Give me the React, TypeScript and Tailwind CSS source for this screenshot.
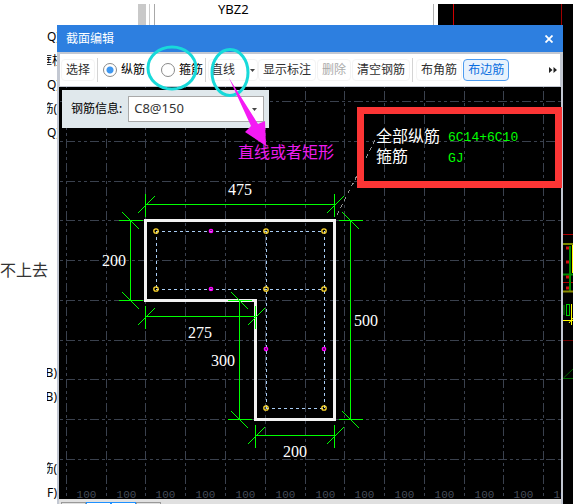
import { useState } from "react";

const rowLabels = [
  { text: "Q)", align: "justify-start" },
  { text: "框柱", align: "justify-center" },
  { text: "Q)", align: "justify-start" },
  { text: "筋(", align: "justify-end" },
  { text: "Q)", align: "justify-start" },
  ...Array.from({ length: 9 }, () => ({ text: "", align: "justify-start" })),
  { text: "B)", align: "justify-end" },
  { text: "B)", align: "justify-end" },
  { text: "", align: "justify-start" },
  { text: "", align: "justify-start" },
  { text: "筋(", align: "justify-end" },
  { text: "F)", align: "justify-end" },
];

const gridX = [66.5, 106.5, 145.5, 185.5, 225.5, 265.5, 305.5, 344.5, 384.5, 424.5, 464.5, 503.5, 543.5];
const gridY = [101.5, 141.5, 181.5, 220.5, 260.5, 300.5, 340.5, 379.5, 419.5, 459.5];

const cornerBars = [
  [156, 231], [266, 231], [324, 231],
  [156, 289], [266, 289], [324, 289],
  [266, 408], [324, 408],
];
const sideBars = [[211, 231], [211, 289], [266, 349], [324, 349]];

const horizontalDims = [
  { y: 204.5, x1: 145.5, x2: 334.5, label: "475", lx: 228, ly: 195 },
  { y: 316.5, x1: 145.5, x2: 255.5, label: "275", lx: 188, ly: 338 },
  { y: 435.5, x1: 255.5, x2: 334.5, label: "200", lx: 283, ly: 457 },
];
const verticalDims = [
  { x: 130.5, y1: 220.5, y2: 300.5, label: "200", lx: 102, ly: 266 },
  { x: 239.5, y1: 300.5, y2: 419.5, label: "300", lx: 211, ly: 366 },
  { x: 350.5, y1: 220.5, y2: 419.5, label: "500", lx: 354, ly: 326 },
];

function SectionDrawing() {
  return (
    <svg className="absolute inset-0 h-full w-full" viewBox="59 87 502 412" preserveAspectRatio="xMinYMin slice" shapeRendering="crispEdges">
      <g stroke="#3a414e" strokeDasharray="9 3 3 3 3 3">
        {gridX.map((x) => <path key={x} d={`M${x} 67V499`} />)}
        {gridY.map((y) => <path key={y} d={`M42 ${y}H561`} />)}
      </g>
      <g fill="#454c59" fontSize="11" fontFamily="'Liberation Mono', monospace" textAnchor="middle">
        {gridX.map((x) => <text key={x} x={x + 20} y="498">100</text>)}
      </g>

      <path d="M145.5 220.5H334.5V419.5H255.5V300.5H145.5Z" fill="none" stroke="#f2f2f2" strokeWidth="3" />
      <path
        d="M156 231.5H324M156 289.5H324M266 408.5H324M156.5 231V289M266.5 231V408M324.5 231V408"
        stroke="#a9cdf5"
        strokeDasharray="3 3"
      />
      <path d="M337 215L376 138" stroke="#8f8f8f" strokeDasharray="4 4" />

      <g fill="none" stroke="#00ff00">
        {horizontalDims.map((d) => (
          <path
            key={d.label}
            d={`M${d.x1} ${d.y}H${d.x2}M${d.x1} ${d.y - 11}v23M${d.x2} ${d.y - 11}v23M${d.x1 - 8} ${d.y + 9}l17 -17M${d.x2 - 8} ${d.y + 9}l17 -17`}
          />
        ))}
        {verticalDims.map((d) => (
          <path
            key={d.label}
            d={`M${d.x} ${d.y1}V${d.y2}M${d.x - 12} ${d.y1}h24M${d.x - 12} ${d.y2}h24M${d.x - 8} ${d.y1 - 8}l17 17M${d.x - 8} ${d.y2 - 8}l17 17`}
          />
        ))}
      </g>
      <g fill="#ffffff" fontSize="16" fontFamily="'Liberation Serif', serif">
        {[...horizontalDims, ...verticalDims].map((d) => (
          <text key={`${d.lx}-${d.ly}`} x={d.lx} y={d.ly}>{d.label}</text>
        ))}
      </g>

      <g fill="none" stroke="#ffd92e" strokeWidth="1.3" shapeRendering="auto">
        {cornerBars.map(([x, y]) => <circle key={`${x}-${y}`} cx={x} cy={y} r="2.2" />)}
      </g>
      <g fill="none" stroke="#ff00ff" strokeWidth="1.5" shapeRendering="auto">
        {sideBars.map(([x, y]) => <circle key={`${x}-${y}`} cx={x} cy={y} r="1.6" />)}
      </g>

      <g fontSize="16" fill="#ffffff" fontFamily="'Noto Sans CJK SC', sans-serif">
        <text x="376" y="142">全部纵筋</text>
        <text x="376" y="162">箍筋</text>
      </g>
      <g fontSize="13" fill="#00ff00" fontFamily="'Liberation Mono', monospace">
        <text x="448" y="141">6C14+6C10</text>
        <text x="448" y="162">GJ</text>
      </g>
    </svg>
  );
}

function PlanStrip() {
  return (
    <svg className="h-full w-[10px] shrink-0 bg-black" viewBox="563 25 10 479" preserveAspectRatio="xMinYMin slice">
      <path d="M563 234.5h10M563 282.5h10" stroke="#b00000" />
      <path d="M563 340.5h10" stroke="#6a0000" />
      <path d="M563 244h10" stroke="#7d8a00" strokeWidth="2" />
      <path d="M570 246V291M563 274.5h10" stroke="#008c00" strokeWidth="2" />
      <path d="M572.5 245V273" stroke="#ffff00" />
      <path d="M563 291.5h10" stroke="#8a8a00" strokeWidth="2" />
      <path d="M566 248h3M566 262h3M566 277h3M566 288h3" stroke="#d01010" strokeWidth="3" />
      <path d="M563 305v10" stroke="#004800" strokeWidth="4" />
      <rect x="566.5" y="304.5" width="3" height="11" fill="none" stroke="#00d000" />
      <path d="M563 320.5h10M571.5 304v21M569 323l4 -5" stroke="#ffff00" />
      <path d="M563 378.5h10M563.5 378l9.5 -9" stroke="#006a00" />
    </svg>
  );
}

// Hand-drawn marks that point out the controls
function Markup() {
  return (
    <svg className="pointer-events-none absolute inset-0 h-full w-full" viewBox="0 0 573 504" preserveAspectRatio="xMinYMin slice">
      <ellipse cx="172" cy="68" rx="24" ry="21" fill="none" stroke="#18dada" strokeWidth="3" />
      <ellipse cx="230" cy="72.5" rx="18" ry="23" fill="none" stroke="#18dada" strokeWidth="3" />
      <path d="M229 78L251 126L245 132L266 146L265 121L258 124Z" fill="#f41af4" />
      <text x="238" y="158" fontSize="16" fill="#ee1cee" fontFamily="'Noto Sans CJK SC', sans-serif">直线或者矩形</text>
      <rect x="360.5" y="110.5" width="198" height="74" fill="none" stroke="#fc3535" strokeWidth="7" />
    </svg>
  );
}

function Divider() {
  return <span className="mx-[2px] h-6 w-px shrink-0 bg-[#d4d4d4]" />;
}

function ToolButton({ children, disabled }: { children: string; disabled?: boolean }) {
  return (
    <button
      disabled={disabled}
      className="h-[22px] shrink-0 rounded border border-[#f4f4f4] px-1 text-[#303030] disabled:text-[#aaaaaa]"
    >
      {children}
    </button>
  );
}

export default function App() {
  const [barType, setBarType] = useState("纵筋");

  return (
    <main className="relative flex h-screen overflow-hidden bg-white font-['Noto_Sans','Noto_Sans_CJK_SC',sans-serif] text-xs text-black">
      <p className="w-[47px] shrink-0 pt-[258px] text-base whitespace-nowrap text-[#333333]">不上去</p>
      <ul className="w-[10px] shrink-0 overflow-hidden pt-[25px]">
        {rowLabels.map((row, i) => (
          <li key={i} className={`flex h-6 items-center whitespace-nowrap ${row.align}`}>
            <span className="shrink-0">{row.text}</span>
          </li>
        ))}
      </ul>

      <div className="flex min-w-0 flex-1 flex-col">
        <div className="flex h-[25px] shrink-0 pt-1">
          <span className="ml-[81px] w-2 bg-[#c9c9c9]" />
          <span className="ml-[3px] w-px bg-[#cccccc]" />
          <span className="ml-1 w-px bg-[#a8a8a8]" />
          <span className="flex-1 pl-[63px] text-[13px] leading-[10px]">YBZ2</span>
          <span className="w-px bg-[#b0b0b0]" />
          <span className="ml-1 flex w-[135px] justify-between bg-black pr-[11px] pl-[15px]">
            <i className="w-px bg-[#d00000]" />
            <i className="w-px bg-[#a00000]" />
          </span>
        </div>

        <div className="flex min-h-0 flex-1">
          <section className="flex min-w-0 flex-1 flex-col">
            <header className="flex h-[27px] shrink-0 items-center justify-between bg-[#2d7fe0] px-[9px] text-white">
              <h1>截面编辑</h1>
              <button aria-label="关闭" className="flex size-[10px] items-center justify-center">
                <svg width="8" height="8" viewBox="0 0 8 8">
                  <path d="M0.5 0.5l7 7M7.5 0.5l-7 7" stroke="#fff" strokeWidth="1.8" />
                </svg>
              </button>
            </header>

            <div className="flex min-h-0 flex-1 flex-col border-x-2 border-t-2 border-[#c3c8d2]">
              <div className="flex h-[33px] shrink-0 items-center border-x border-b border-[#c3c8d2] whitespace-nowrap">
                <span className="w-px" />
                <ToolButton>选择</ToolButton>
                <Divider />
                {["纵筋", "箍筋"].map((name) => (
                  <label key={name} className="mr-[13px] ml-[3px] flex shrink-0 items-center gap-1 last-of-type:mr-0">
                    <input
                      type="radio"
                      name="barType"
                      checked={barType === name}
                      onChange={() => setBarType(name)}
                      className="size-[14px] appearance-none rounded-full border border-[#8a8a8a] bg-white checked:bg-[radial-gradient(circle,#3f97f0_3px,transparent_4px)]"
                    />
                    {name}
                  </label>
                ))}
                <Divider />
                <button className="flex h-[22px] shrink-0 items-center gap-[15px] rounded border border-[#f4f4f4] px-[2px] text-[#303030]">
                  直线
                  <svg width="5" height="3" viewBox="0 0 5 3"><path d="M0 0h5L2.5 3z" fill="#444" /></svg>
                </button>
                <ToolButton>显示标注</ToolButton>
                <span className="w-px" />
                <ToolButton disabled>删除</ToolButton>
                <span className="w-px" />
                <ToolButton>清空钢筋</ToolButton>
                <Divider />
                <span className="w-px" />
                <ToolButton>布角筋</ToolButton>
                <span className="w-px" />
                <button className="h-[22px] shrink-0 rounded border border-[#4d9cf0] bg-[#e7f2fd] px-1 text-[#0a6ee0]">布边筋</button>
                <button aria-label="更多" className="mr-[3px] ml-auto">
                  <svg width="8" height="6" viewBox="0 0 8 6"><path d="M0 0l3.5 3L0 6zM4.5 0L8 3L4.5 6z" fill="#222" /></svg>
                </button>
              </div>

              <div className="relative min-h-0 flex-1 overflow-hidden bg-black">
                <SectionDrawing />
                <div className="absolute top-[3px] left-[3px] flex h-[38px] items-center gap-[6px] bg-[#e0e8ec] pr-[5px] pl-[9px]">
                  <label htmlFor="barInfo">钢筋信息:</label>
                  <div className="relative">
                    <select id="barInfo" className="h-[26px] w-[136px] appearance-none border border-[#a9a9a9] bg-white px-[5px] text-[13px] text-[#333333]">
                      <option>C8@150</option>
                    </select>
                    <svg className="pointer-events-none absolute top-3 right-[7px]" width="5" height="3" viewBox="0 0 5 3">
                      <path d="M0 0h5L2.5 3z" fill="#444" />
                    </svg>
                  </div>
                </div>
              </div>

              <footer className="flex h-[5px] shrink-0 bg-[#e0e0e0] pt-[3px] pl-[2px]">
                <span className="w-[25px] border-x border-t border-[#999999]" />
                <span className="w-[25px] border-x border-t border-[#1e90ff] bg-white" />
                <span className="w-[25px] border-x border-t border-[#1e90ff] bg-white" />
                <span className="w-[25px] border-x border-t border-[#999999]" />
              </footer>
            </div>
          </section>
          <PlanStrip />
        </div>
      </div>

      <Markup />
    </main>
  );
}
